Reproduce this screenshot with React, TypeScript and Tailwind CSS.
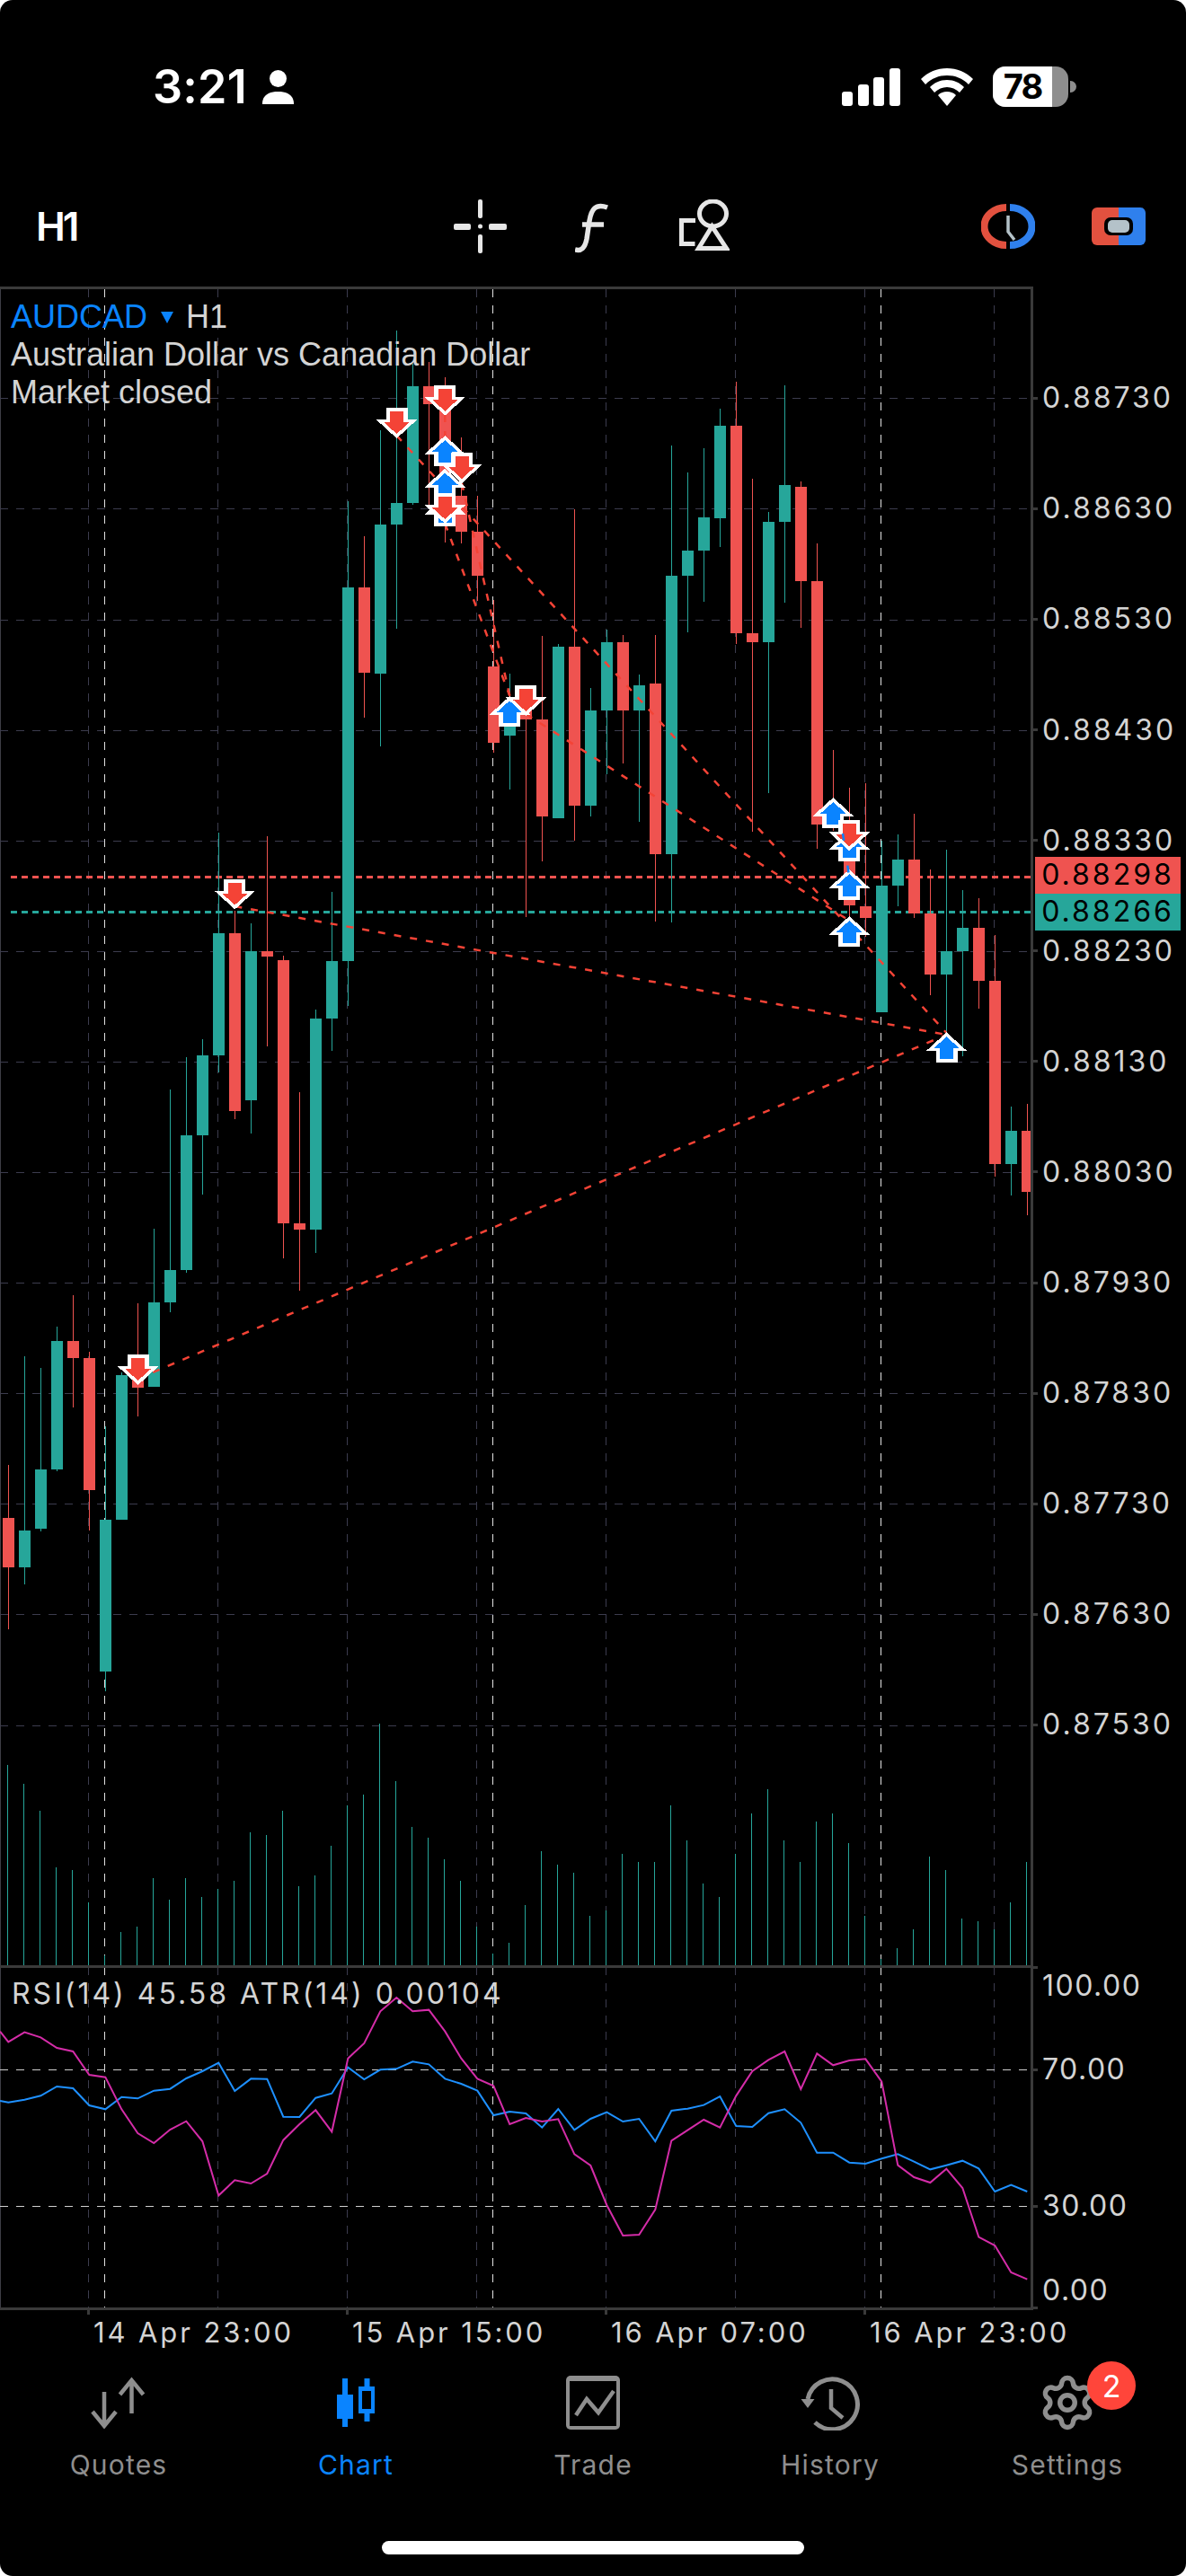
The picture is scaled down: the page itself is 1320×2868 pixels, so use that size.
import { Settings } from 'lucide-react';

const RED = '#ef5350';
const GREEN = '#26a69a';
const ARROW_RED = '#f44336';
const ARROW_BLUE = '#0a84ff';

// [high, bodyTop, bodyBottom, low, isUp] in page pixels
const candles: [number, number, number, number, number][] = [
  [1631, 1690, 1745, 1814, 0], [1510, 1704, 1745, 1764, 1], [1523, 1636, 1702, 1705, 1], [1477, 1493, 1636, 1638, 1],
  [1442, 1493, 1512, 1567, 0], [1505, 1512, 1659, 1704, 0], [1588, 1692, 1861, 1883, 1], [1528, 1531, 1692, 1692, 1],
  [1451, 1530, 1545, 1577, 0], [1368, 1450, 1544, 1544, 1], [1213, 1414, 1450, 1461, 1], [1177, 1264, 1414, 1417, 1],
  [1157, 1175, 1264, 1330, 1], [927, 1039, 1175, 1194, 1], [1014, 1039, 1237, 1246, 0], [1028, 1059, 1225, 1262, 1],
  [931, 1059, 1065, 1165, 0], [1064, 1069, 1362, 1401, 0], [1216, 1362, 1369, 1437, 0], [1124, 1134, 1369, 1395, 1],
  [993, 1070, 1134, 1170, 1], [558, 654, 1070, 1120, 1], [597, 654, 749, 799, 0], [479, 584, 750, 831, 1],
  [368, 560, 584, 700, 1], [405, 430, 560, 562, 1], [403, 430, 450, 563, 0], [420, 430, 585, 604, 0],
  [487, 552, 592, 605, 0], [552, 592, 641, 669, 0], [668, 742, 827, 838, 0], [750, 800, 819, 879, 1],
  [770, 790, 801, 1021, 0], [708, 801, 909, 959, 0], [717, 720, 911, 911, 1], [567, 720, 897, 936, 0],
  [766, 791, 897, 909, 1], [701, 715, 791, 862, 1], [707, 715, 791, 850, 0], [751, 763, 791, 915, 1],
  [707, 761, 951, 1026, 0], [496, 641, 951, 1027, 1], [526, 613, 641, 704, 1], [499, 576, 613, 670, 1],
  [455, 474, 577, 609, 1], [425, 474, 705, 717, 0], [533, 705, 715, 926, 0], [570, 581, 715, 883, 1],
  [429, 540, 581, 671, 1], [536, 542, 647, 699, 0], [605, 647, 918, 945, 0], [835, 905, 918, 925, 0],
  [877, 914, 1008, 1020, 0], [872, 1009, 1022, 1043, 0], [936, 986, 1127, 1127, 1], [929, 957, 986, 1009, 1],
  [906, 957, 1017, 1022, 0], [968, 1017, 1085, 1108, 0], [946, 1059, 1085, 1150, 1], [991, 1033, 1059, 1176, 1],
  [1000, 1033, 1092, 1123, 0], [1041, 1092, 1296, 1310, 0], [1232, 1259, 1296, 1331, 1], [1229, 1259, 1327, 1353, 0],
];

const volumeTops = [
  ...[886, 947, 1034, 1217, 1225, 1330, 1502, 1426, 1408, 1251, 1321, 1251, 1312, 1286, 1260, 1103, 1112, 1034, 1278, 1243, 1147, 1016, 981, 753, 938, 1086, 1121, 1191, 1260, 1408, 1495, 1461, 1339, 1164, 1208, 1234, 1373].map((v) => 1660 + v / 2.904),
  ...[680, 492, 519, 519, 330, 447, 591, 636, 492, 357, 276, 447, 519, 384, 357, 456, 699, 843, 807, 744, 501, 546, 708, 717, 744, 654, 519].map((v) => 1900 + v / 3),
];

const rsiLine = [280, 248, 265, 300, 312, 390, 398, 505, 585, 618, 573, 545, 612, 793, 742, 753, 720, 608, 555, 508, 580, 335, 285, 178, 132, 178, 173, 245, 335, 403, 427, 555, 534, 546, 538, 655, 693, 825, 927, 924, 840, 610, 575, 540, 566, 460, 378, 340, 312, 438, 319, 358, 342, 337, 413, 692, 732, 750, 704, 768, 932, 960, 1050, 1073];
const atrLine = [482, 473, 460, 429, 435, 492, 505, 464, 469, 443, 437, 402, 378, 350, 444, 403, 404, 530, 531, 467, 452, 365, 405, 373, 370, 346, 355, 403, 420, 443, 525, 513, 519, 566, 504, 574, 537, 515, 546, 537, 612, 510, 503, 491, 462, 561, 564, 518, 505, 550, 650, 650, 683, 687, 670, 655, 680, 706, 692, 677, 703, 780, 758, 780];

const candleX = (i: number) => 9.3 + 18 * i;
const toPoints = (line: number[], startY: number) =>
  `0,${2180 + startY / 3} ` + line.map((v, i) => `${candleX(i)},${2180 + v / 3}`).join(' ');

const priceGrid = [443.3, 566.4, 689.5, 812.6, 935.7, 1058.8, 1181.9, 1305, 1428.1, 1551.2, 1674.3, 1797.4, 1920.5];
const timeGrid = [98.5, 242.5, 386.5, 530.5, 674.5, 818.5, 962.5, 1106.5];
const dayGrid = [116.5, 548.5, 980.5];

const prices = ['0.88730', '0.88630', '0.88530', '0.88430', '0.88330', '0.88230', '0.88130', '0.88030', '0.87930', '0.87830', '0.87730', '0.87630', '0.87530'];

// trade connectors: x1, y1, x2, y2
const tradeLines = [
  [153.6, 1535, 1053.5, 1152],
  [261.4, 1009, 1053.5, 1152],
  [441.5, 485, 1053.5, 1150],
  [495.3, 583, 567.4, 775],
  [514, 538, 567.4, 775],
  [585.4, 795, 945.3, 1025],
  [495.3, 462, 495.3, 583],
];

// fractal markers in paint order: x, tip y, direction
const markers: [number, number, 'up' | 'down'][] = [
  [153.6, 1542, 'down'],
  [261.4, 1012.5, 'down'],
  [441.5, 488, 'down'],
  [495.3, 485, 'up'],
  [495.3, 462.7, 'down'],
  [514, 538, 'down'],
  [495.3, 521.7, 'up'],
  [495.3, 551.7, 'up'],
  [495.3, 583, 'down'],
  [567.4, 775, 'up'],
  [585.4, 797, 'down'],
  [927.3, 888, 'up'],
  [945.3, 925, 'up'],
  [945.3, 947.3, 'down'],
  [945.3, 968, 'up'],
  [945.3, 1020, 'up'],
  [1053.5, 1149.3, 'up'],
];

function Marker({ x, y, dir }: { x: number; y: number; dir: 'up' | 'down' }) {
  const s = dir === 'down' ? -1 : 1;
  const outer = [[0, 0], [23, 21], [12, 21], [12, 34], [-12, 34], [-12, 21], [-23, 21]];
  const inner = [[0, 5], [14.5, 18], [7.5, 18], [7.5, 30], [-7.5, 30], [-7.5, 18], [-14.5, 18]];
  const pts = (list: number[][]) => list.map(([a, b]) => `${x + a},${y + s * b}`).join(' ');
  return (
    <g shapeRendering="crispEdges">
      <polygon points={pts(outer)} fill="#fff" />
      <polygon points={pts(inner)} fill={dir === 'down' ? ARROW_RED : ARROW_BLUE} />
    </g>
  );
}

function PriceChart() {
  return (
    <svg className="block w-[1147px] h-[1866px]" viewBox="0 322 1147 1866">
      <line x1="0.5" y1="322" x2="0.5" y2="2188" stroke="#3d3d45" />
      <g shapeRendering="crispEdges">
        {priceGrid.map((y) => (
          <line key={y} x1="0" y1={Math.round(y) + 0.5} x2="1147" y2={Math.round(y) + 0.5} stroke="#3c3c4e" strokeDasharray="9 9" />
        ))}
        {timeGrid.map((x) => (
          <line key={x} x1={x} y1="322" x2={x} y2="2188" stroke="#3c3c4e" strokeDasharray="9 9" />
        ))}
        {dayGrid.map((x) => (
          <line key={x} x1={x} y1="322" x2={x} y2="2188" stroke="#e2e2e2" strokeDasharray="9 9" />
        ))}
        <line x1="12" y1="976" x2="1147" y2="976" stroke={RED} strokeWidth="3" strokeDasharray="7 5" />
        <line x1="12" y1="1015" x2="1147" y2="1015" stroke={GREEN} strokeWidth="3" strokeDasharray="7 5" />
        {volumeTops.map((top, i) => (
          <rect key={i} x={Math.round(candleX(i) - 1.5)} y={top} width="1" height={2188 - top} fill={GREEN} />
        ))}
        {candles.map(([high, top, bottom, low, up], i) => {
          const x = Math.round(candleX(i));
          const color = up ? GREEN : RED;
          return (
            <g key={i} fill={color}>
              <rect x={x} y={high} width="1" height={low - high} />
              <rect x={x - 6} y={top} width="13" height={bottom - top} />
            </g>
          );
        })}
      </g>
      {tradeLines.map(([x1, y1, x2, y2], i) => (
        <line key={i} x1={x1} y1={y1} x2={x2} y2={y2} stroke={ARROW_RED} strokeWidth="2.5" strokeDasharray="8 10" />
      ))}
      <line x1="495" y1="560" x2="514" y2="520" stroke={ARROW_BLUE} strokeWidth="2.5" strokeDasharray="8 10" />
      {markers.map(([x, y, dir], i) => (
        <Marker key={i} x={x} y={y} dir={dir} />
      ))}
      <line x1="938" y1="928" x2="945" y2="975" stroke={ARROW_BLUE} strokeWidth="2.5" strokeDasharray="8 10" />
    </svg>
  );
}

function RsiChart() {
  return (
    <svg className="block w-[1147px] h-[378px]" viewBox="0 2191 1147 378">
      <line x1="0.5" y1="2191" x2="0.5" y2="2569" stroke="#3d3d45" />
      <g shapeRendering="crispEdges">
        {timeGrid.map((x) => (
          <line key={x} x1={x} y1="2190" x2={x} y2="2569" stroke="#3c3c4e" strokeDasharray="9 9" />
        ))}
        {dayGrid.map((x) => (
          <line key={x} x1={x} y1="2190" x2={x} y2="2569" stroke="#e2e2e2" strokeDasharray="9 9" />
        ))}
        <line x1="0" y1="2304.5" x2="1147" y2="2304.5" stroke="#cfcfcf" strokeDasharray="9 9" />
        <line x1="0" y1="2456.5" x2="1147" y2="2456.5" stroke="#cfcfcf" strokeDasharray="9 9" />
      </g>
      <polyline points={toPoints(atrLine, 477)} fill="none" stroke="#1e90ff" strokeWidth="2" />
      <polyline points={toPoints(rsiLine, 245)} fill="none" stroke="#d42ca8" strokeWidth="2" />
    </svg>
  );
}

function StatusBar() {
  return (
    <div className="flex h-[132px] items-start justify-between pl-[170px] pr-[122px] pt-[74px] text-white">
      <div className="flex items-center gap-[17px]">
        <span className="font-['Inter'] text-[52px] font-semibold leading-[46px] tracking-[0.2px]">3:21</span>
        <svg width="35" height="38" viewBox="0 0 35 38" fill="#fff">
          <ellipse cx="17.5" cy="9.5" rx="9.5" ry="9.5" />
          <path d="M0 38c0-3 0-14 17.5-14S35 35 35 38z" />
        </svg>
      </div>
      <div className="flex items-center">
        <svg width="66" height="42" viewBox="0 0 66 42" fill="#fff" className="mr-[22px]">
          <rect x="0" y="26" width="12" height="16" rx="3" />
          <rect x="18" y="18" width="12" height="24" rx="3" />
          <rect x="35" y="10" width="12" height="32" rx="3" />
          <rect x="53" y="0" width="12" height="42" rx="3" />
        </svg>
        <svg width="58" height="42" viewBox="0 0 58 42" fill="#fff" className="mr-[22px]">
          <path d="M29 0C18 0 8 4 0 12l5 6C12 11 20 8 29 8s17 3 24 10l5-6C50 4 40 0 29 0z" />
          <path d="M29 13c-8 0-14 3-19 8l5 6c4-4 9-6 14-6s10 2 14 6l5-6c-5-5-11-8-19-8z" />
          <path d="M29 26c-4 0-7 1-10 4l10 12 10-12c-3-3-6-4-10-4z" />
        </svg>
        <div className="flex h-[45px] w-[84px] overflow-hidden rounded-[14px] bg-[#8e8e8e]">
          <div className="flex h-full w-[66px] items-center justify-center bg-white font-['Inter'] text-[38px] font-bold tracking-[-2px] text-black">
            78
          </div>
        </div>
        <div className="ml-[2px] h-[13px] w-[7px] rounded-r-full bg-[#8e8e8e]" />
      </div>
    </div>
  );
}

function Toolbar() {
  return (
    <div className="flex h-[187px] items-start pl-[40px] pt-[90px]">
      <span className="w-[465px] font-['Inter'] text-[44px] font-semibold leading-[60px] tracking-[-3px] text-white">H1</span>
      <svg width="60" height="60" viewBox="505 222 60 60" className="mr-[75px]" fill="#e6e6e6">
        <rect x="505" y="249" width="19" height="7" rx="2" />
        <rect x="544" y="249" width="20" height="7" rx="2" />
        <rect x="532" y="222" width="5" height="21" rx="2" />
        <rect x="532" y="261" width="5" height="21" rx="2" />
        <circle cx="534.5" cy="252" r="2.5" />
      </svg>
      <svg width="41" height="60" viewBox="640 222 41 60" className="mr-[75px]" fill="none" stroke="#e6e6e6" strokeWidth="5.500">
        <path d="M676 231c-13-5-18 2-20 15l-3 20c-2 10-6 14-13 12" />
        <path d="M648 250h24" />
      </svg>
      <svg width="56" height="60" viewBox="756 222 56 60" className="mr-[280px]" fill="none" stroke="#e6e6e6" strokeWidth="5">
        <path d="M774 245.500h-15.500v26h15" />
        <ellipse cx="793.500" cy="238" rx="15" ry="14" />
        <path d="M792.500 252l-15 24.500h31z" />
      </svg>
      <svg width="60" height="60" viewBox="1092 222 60 60" className="mr-[63px]" fill="none">
        <path d="M1120 231a24.500 21 0 0 0 0 42" stroke="#e2513f" strokeWidth="8" />
        <path d="M1124 231a24.500 21 0 0 1 0 42" stroke="#2f80ed" strokeWidth="8" />
        <path d="M1122 240v18l7 9" stroke="#b4c2c9" strokeWidth="3.500" />
      </svg>
      <svg width="60" height="60" viewBox="1215 222 60 60">
        <path d="M1221 231h24v42h-24a6 6 0 0 1-6-6v-30a6 6 0 0 1 6-6z" fill="#e2513f" />
        <path d="M1245 231h24a6 6 0 0 1 6 6v30a6 6 0 0 1-6 6h-24z" fill="#2f80ed" />
        <rect x="1229" y="242" width="32" height="20" rx="7" fill="#000" />
        <rect x="1233" y="245" width="24" height="14" rx="5" fill="#b4c2c9" />
      </svg>
    </div>
  );
}

function AxisTick() {
  return <div className="mr-[5px] h-[3px] w-[6px] shrink-0 -ml-[1px] bg-[#3a3a3a]" />;
}

const priceText = "font-['Inter'] text-[32px] tracking-[3px] text-[#d4d4d4]";
const rsiText = "font-['Inter'] text-[32px] tracking-[1.5px] text-[#d4d4d4]";

function PriceAxis() {
  return (
    <div className="relative flex-1 pt-[62.75px]">
      {prices.map((p) => (
        <div key={p} className="flex h-[123.1px] items-center">
          <AxisTick />
          <span className={priceText}>{p}</span>
        </div>
      ))}
      <div className="absolute left-[2px] top-[634.600px] flex h-[41px] w-[162px] items-center justify-center bg-[#ef5350] font-['Inter'] text-[32px] tracking-[3px] text-black">
        0.88298
      </div>
      <div className="absolute left-[2px] top-[675.600px] flex h-[41px] w-[162px] items-center justify-center bg-[#26a69a] font-['Inter'] text-[32px] tracking-[3px] text-black">
        0.88266
      </div>
    </div>
  );
}

function RsiAxis() {
  return (
    <div className="relative flex-1">
      <div className="absolute left-[-1px] top-[-2px] h-[3px] w-[6px] bg-[#3a3a3a]" />
      <div className="absolute bottom-[1px] left-[-1px] h-[3px] w-[6px] bg-[#3a3a3a]" />
      <div className="flex h-[40px] items-center pl-[10px]">
        <span className={rsiText}>100.00</span>
      </div>
      <div className="mt-[53px] flex h-[40px] items-center">
        <AxisTick />
        <span className={rsiText}>70.00</span>
      </div>
      <div className="mt-[112px] flex h-[40px] items-center">
        <AxisTick />
        <span className={rsiText}>30.00</span>
      </div>
      <div className="mt-[54px] flex h-[40px] items-center pl-[10px]">
        <span className={rsiText}>0.00</span>
      </div>
    </div>
  );
}

function TabIcon({ name }: { name: string }) {
  if (name === 'Quotes') {
    return (
      <svg width="64" height="60" viewBox="100 2646 64 60" fill="none" stroke="#8e8e8e" strokeWidth="4.500">
        <path d="M116 2664v37M103 2686l13 16 13-16" />
        <path d="M146.500 2688v-37M133.500 2667l13-16 13 16" />
      </svg>
    );
  }
  if (name === 'Chart') {
    return (
      <svg width="46" height="60" viewBox="372 2646 46 60" fill="#0a84ff">
        <rect x="380" y="2649" width="6" height="54" />
        <rect x="374" y="2667" width="18" height="27" />
        <rect x="404.500" y="2649" width="6" height="48" />
        <rect x="398" y="2658" width="18" height="30" />
        <rect x="402" y="2663" width="10" height="20" fill="#000" />
      </svg>
    );
  }
  if (name === 'Trade') {
    return (
      <svg width="60" height="60" viewBox="629 2646 60 60" fill="none" stroke="#8e8e8e">
        <path d="M634 2646h50a5 5 0 0 1 5 5v50a5 5 0 0 1-5 5h-50a5 5 0 0 1-5-5v-50a5 5 0 0 1 5-5z" fill="#8e8e8e" stroke="none" />
        <rect x="633" y="2652" width="52" height="50" fill="#000" stroke="none" />
        <path d="M640 2690l12-18 13 15 17-24" strokeWidth="4.500" />
      </svg>
    );
  }
  if (name === 'History') {
    return (
      <svg width="66" height="62" viewBox="889 2645 66 62" fill="none" stroke="#8e8e8e" strokeWidth="5">
        <path d="M897 2672a28 28 0 1 1 8 26" />
        <path d="M889.500 2672h15l-7.500 10z" fill="#8e8e8e" stroke="none" />
        <path d="M923 2661v21l13 11" strokeWidth="4.500" />
      </svg>
    );
  }
  return <Settings size={66} strokeWidth={2} color="#8e8e8e" />;
}

const tabs = ['Quotes', 'Chart', 'Trade', 'History', 'Settings'];

function TabBar() {
  return (
    <div className="flex h-[127px] items-start">
      {tabs.map((name) => (
        <div key={name} className="relative flex w-[264px] flex-col items-center">
          <div className="flex h-[64px] items-center">
            <TabIcon name={name} />
          </div>
          <span className={`mt-[19px] font-['Inter'] text-[30px] leading-[36px] tracking-[1.2px] ${name === 'Chart' ? 'text-[#0a84ff]' : 'text-[#8e8e8e]'}`}>
            {name}
          </span>
          {name === 'Settings' && (
            <div className="absolute left-[154px] top-[-14px] flex h-[54px] w-[54px] items-center justify-center rounded-full bg-[#ff453a] font-['Inter'] text-[34px] text-white">
              2
            </div>
          )}
        </div>
      ))}
    </div>
  );
}

export default function App() {
  return (
    <div className="flex h-[2868px] w-[1320px] flex-col overflow-hidden rounded-[14px] bg-black">
      <StatusBar />
      <Toolbar />

      <div className="flex h-[1872px]">
        <div className="relative w-[1150px] shrink-0 border-y-[3px] border-r-[3px] border-[#3a3a3a]">
          <PriceChart />
          <div className="absolute left-[12px] top-[10px] font-['Liberation_Sans'] text-[36px] leading-[42px] text-[#d4d4d4]">
            <div className="flex items-center">
              <span className="text-[#0a84ff]">AUDCAD</span>
              <span className="ml-[15px] mr-[14px] h-0 w-0 border-x-[7px] border-t-[13px] border-x-transparent border-t-[#0a84ff]" />
              <span>H1</span>
            </div>
            <div>Australian Dollar vs Canadian Dollar</div>
            <div>Market closed</div>
          </div>
        </div>
        <PriceAxis />
      </div>

      <div className="flex h-[381px]">
        <div className="relative w-[1150px] shrink-0 border-b-[3px] border-r-[3px] border-[#3a3a3a]">
          <RsiChart />
          <div className="absolute left-[13px] top-[8px] font-['Inter'] text-[32px] leading-[42px] tracking-[3px] text-[#d4d4d4]">
            RSI(14) 45.58 ATR(14) 0.00104
          </div>
        </div>
        <RsiAxis />
      </div>

      <div className="flex h-[71px] items-start pt-[5px]">
        {['14 Apr 23:00', '15 Apr 15:00', '16 Apr 07:00', '16 Apr 23:00'].map((t, i) => (
          <div key={t} className={`relative w-[288px] font-['Inter'] text-[31px] leading-[40px] tracking-[2.9px] text-[#d4d4d4] ${i === 0 ? 'ml-[104px]' : ''}`}>
            <div className="absolute left-[-7px] top-[-5px] h-[5px] w-[3px] bg-[#3a3a3a]" />
            {t}
          </div>
        ))}
      </div>

      <TabBar />

      <div className="flex justify-center pt-[59px]">
        <div className="h-[15px] w-[470px] rounded-full bg-white" />
      </div>
    </div>
  );
}
